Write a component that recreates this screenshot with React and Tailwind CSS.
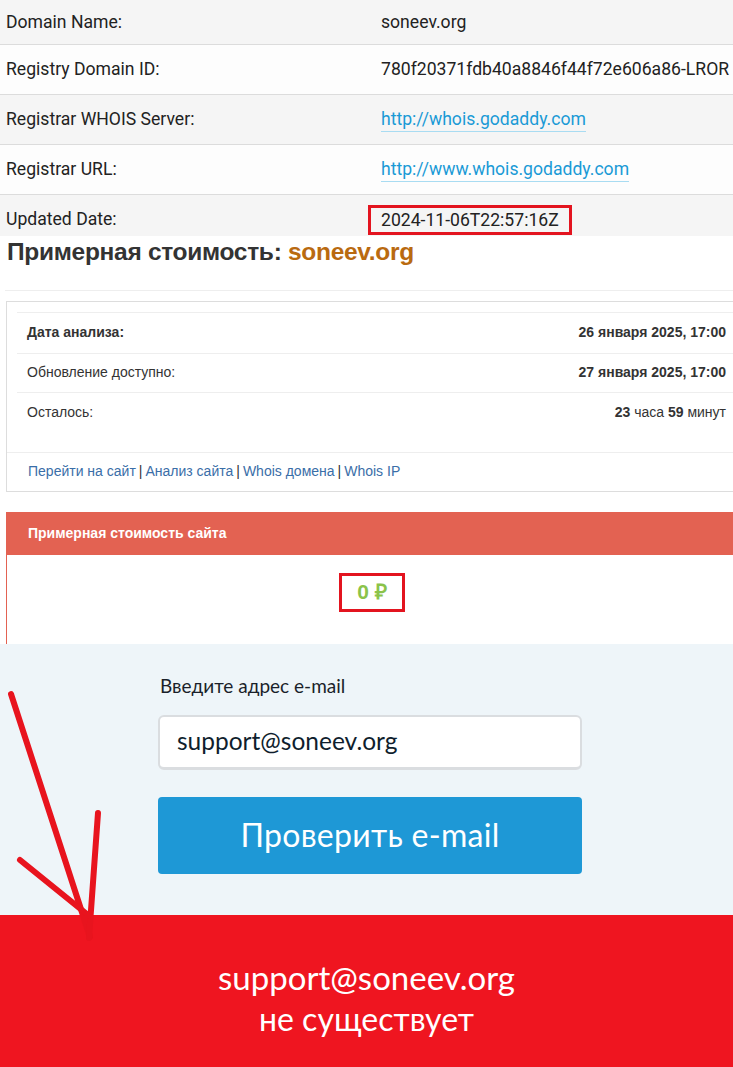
import React from 'react';

const WHOIS = [
  { label: 'Domain Name:', value: 'soneev.org' },
  { label: 'Registry Domain ID:', value: '780f20371fdb40a8846f44f72e606a86-LROR' },
  { label: 'Registrar WHOIS Server:', value: 'http://whois.godaddy.com', link: true },
  { label: 'Registrar URL:', value: 'http://www.whois.godaddy.com', link: true },
  { label: 'Updated Date:', value: '2024-11-06T22:57:16Z', boxed: true },
];

const STATS = [
  { label: 'Дата анализа:', bold: true, value: <b>26 января 2025, 17:00</b> },
  { label: 'Обновление доступно:', value: <b>27 января 2025, 17:00</b> },
  { label: 'Осталось:', value: <><b>23</b> часа <b>59</b> минут</> },
];

const rowHeight = (i) => {
  if (i === 0) return 'h-[44px]';
  if (i === 4) return 'h-[42px] pt-[8px] border-t border-[#dcdcdc]';
  return 'h-[50px] border-t border-[#dcdcdc]';
};

function WhoisTable() {
  return (
    <div className="font-['Roboto',sans-serif] text-[17.6px] text-[#222]">
      {WHOIS.map((row, i) => (
        <div
          key={row.label}
          className={`flex items-center ${rowHeight(i)} ${i % 2 === 0 ? 'bg-[#f5f5f5]' : 'bg-[#fdfdfd]'}`}
        >
          <div className="w-[381px] pl-[6px] shrink-0">{row.label}</div>
          <div className="whitespace-nowrap">
            {row.link ? (
              <a className="text-[#1a9ad6] border-b border-[#a9dcf2] pb-[2px]">{row.value}</a>
            ) : row.boxed ? (
              <span className="-ml-[13px] inline-block border-[3px] border-[#e3141f] px-[10px] leading-[24px]">{row.value}</span>
            ) : (
              row.value
            )}
          </div>
        </div>
      ))}
    </div>
  );
}

function Analysis() {
  return (
    <div className="font-['Liberation_Sans',Arial,sans-serif] text-[#333]">
      <div className="pl-[7px] pt-[2px] pb-[24px] ml-[5px] border-b border-[#eee]">
        <h1 className="-ml-[5px] text-[24.5px] font-bold leading-[28px] text-[#333] tracking-[-0.3px]">
          Примерная стоимость: <span className="text-[#b96a10]">soneev.org</span>
        </h1>
      </div>

      <div className="mt-[10px] ml-[6px] border border-r-0 border-[#ddd] text-[14px]">
        <div className="pl-[10px] pt-[10px]">
          <div className="border-t border-[#eee]">
            {STATS.map((row, i) => (
              <div
                key={row.label}
                className={`flex justify-between items-center h-[39.5px] pl-[10px] pr-[7px] ${i > 0 ? 'border-t border-[#eee]' : ''}`}
              >
                <span className={row.bold ? 'font-bold' : ''}>{row.label}</span>
                <span>{row.value}</span>
              </div>
            ))}
          </div>
        </div>
        <div className="mt-[20px] border-t border-[#eee] h-[39px] flex items-center pl-[21px] text-[#3a6ea8]">
          <a>Перейти на сайт</a>
          <span className="text-[#333] px-[3px]">|</span>
          <a>Анализ сайта</a>
          <span className="text-[#333] px-[3px]">|</span>
          <a>Whois домена</a>
          <span className="text-[#333] px-[3px]">|</span>
          <a>Whois IP</a>
        </div>
      </div>

      <div className="mt-[20px] ml-[6px]">
        <div className="h-[43px] bg-[#e36252] flex items-center pl-[22px] text-white text-[14px] font-bold">
          Примерная стоимость сайта
        </div>
        <div className="h-[89px] border-l border-[#e36252] bg-white flex justify-center pt-[18px]">
          <div className="ml-[4px] h-[39px] px-[15px] border-[3px] border-[#e3141f] flex items-center text-[21px] font-bold text-[#8bc34a]">
            0 ₽
          </div>
        </div>
      </div>
    </div>
  );
}

function EmailCheck() {
  return (
    <div className="font-['Lato',sans-serif]">
      <div className="bg-[#eef5f9] h-[271px] pt-[30px]">
        <div className="ml-[158px] w-[424px]">
          <div className="pl-[2px] text-[19px] text-[#1a1f2a] leading-[24px]">Введите адрес e-mail</div>
          <div className="mt-[17px] h-[55px] bg-white rounded-[6px] border-2 border-[#dadde0] border-b-[3px] flex items-center pl-[17px] text-[24.5px] text-[#0f1e2d]">
            support@soneev.org
          </div>
          <button className="mt-[27px] w-full h-[77px] bg-[#1e98d6] rounded-[4px] text-white text-[32px] tracking-[0.3px]">
            Проверить e-mail
          </button>
        </div>
      </div>
      <div className="bg-[#ef1520] h-[153px] flex flex-col items-center pt-[41px] text-white text-[33px] leading-[42px]">
        <div>support@soneev.org</div>
        <div className="text-[32px]">не существует</div>
      </div>
    </div>
  );
}

function Arrow() {
  return (
    <svg className="absolute left-0 top-[680px] pointer-events-none" width="120" height="280" viewBox="0 0 120 280">
      <g stroke="#e8141e" strokeWidth="6" strokeLinecap="round" fill="none">
        <path d="M11 14 L90 257" />
        <path d="M98 133 L89 258" />
        <path d="M20 180 L88 235" />
      </g>
    </svg>
  );
}

export default function App() {
  return (
    <div className="relative w-[733px] bg-white overflow-hidden">
      <WhoisTable />
      <Analysis />
      <EmailCheck />
      <Arrow />
    </div>
  );
}
